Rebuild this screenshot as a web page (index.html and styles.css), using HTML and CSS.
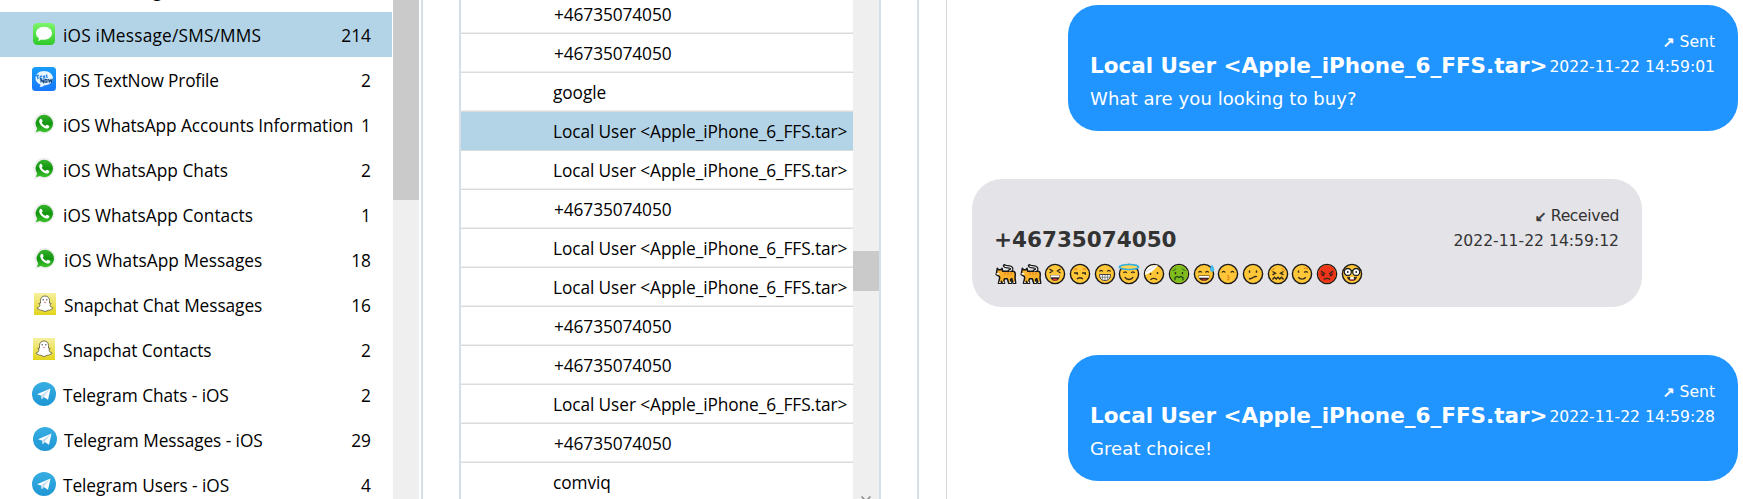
FILE: index.html
```
<!DOCTYPE html>
<html lang="en">
<head>
<meta charset="utf-8">
<title>Messages</title>
<link rel="stylesheet" href="styles.css">
</head>
<body>
<svg class="defs" width="0" height="0">
  <defs>
    <linearGradient id="gGreen" x1="0" y1="0" x2="0" y2="1"><stop offset="0" stop-color="#7df56b"/><stop offset="1" stop-color="#2fc928"/></linearGradient>
    <linearGradient id="gBlue" x1="0" y1="0" x2="0" y2="1"><stop offset="0" stop-color="#189df8"/><stop offset="1" stop-color="#1878fb"/></linearGradient>
    <linearGradient id="gWa" x1="0" y1="0" x2="0" y2="1"><stop offset="0" stop-color="#35b32b"/><stop offset=".5" stop-color="#139510"/><stop offset="1" stop-color="#3fc42e"/></linearGradient>
    <linearGradient id="gSnap" x1="0" y1="0" x2="0" y2="1"><stop offset="0" stop-color="#f6f0a0"/><stop offset="1" stop-color="#e3d51c"/></linearGradient>
    <linearGradient id="gTg" x1="0" y1="0" x2="0" y2="1"><stop offset="0" stop-color="#37aee2"/><stop offset="1" stop-color="#1e96d4"/></linearGradient>
    <symbol id="imsg" viewBox="0 0 24 24"><rect x="1" y="1" width="22" height="22" rx="4.5" fill="url(#gGreen)"/><path d="M12 4.8c4.500 0 8 2.900 8 6.500s-3.500 6.500-8 6.500c-1 0-2-.1-2.800-.4-1 .9-2.200 1.300-3.400 1.300.7-.6 1.200-1.400 1.200-2.300C5.200 15.200 4 13.400 4 11.300c0-3.600 3.500-6.500 8-6.500z" fill="#fff"/></symbol>
    <symbol id="tnow" viewBox="0 0 24 24"><rect width="24" height="24" rx="3.500" fill="url(#gBlue)"/><path d="M12 4c5 0 9 3.200 9 7.300s-4 7.100-9 7.100c-1 1-2.700 1.600-4.500 1.700.8-.8 1-1.700.9-2.600C5.500 16.500 3.500 14.200 3.500 11.300 3.500 7.200 7 4 12 4z" fill="#e9f5ff"/><path d="M3.500 8.800l3.500-.6M5.300 8.500l.8 3.700M8 9.500l2.200-.4M8 9.500l.4 2.500 2-.4M11 8.800l2.200 2.600M13 8.500l-1.600 3M14.500 7.500l.6 3.600" stroke="#2586e5" stroke-width="1.300" fill="none"/><path d="M9 15.500v-3.300l2.500 3.200v-3M13 12.500h2v2.600h-2zM16.500 12l.8 3 1.200-2 .8 2 1-3.300" stroke="#174a86" stroke-width="1.200" fill="none"/></symbol>
    <symbol id="wa" viewBox="0 0 24 24"><path d="M12 1.500a10 9.800 0 1 1-4.700 18.500L2.500 21.500 3.700 17A10 9.800 0 0 1 12 1.500z" fill="#f4f2f4" stroke="#dddbe0" stroke-width=".7" stroke-dasharray="2 1"/><path d="M12.200 2.800a8.700 8.700 0 1 1-4.200 16.300l-4.100 1.200 1.200-4A8.700 8.700 0 0 1 12.200 2.800z" fill="url(#gWa)"/><path d="M8.200 7c.5-.5 1.200-.4 1.500.2l.9 1.700c.2.500-.6 1.200-.8 1.600.5 1.500 1.800 2.700 3.600 3.400.5-.3 1-1.300 1.500-1.100l2 1c.9.500.1 2-.7 2.400-1.300.7-3.300 0-4.900-1-1.700-1.100-3.400-3-3.900-4.800C7 9.100 7.300 7.700 8.200 7z" fill="#fff"/></symbol>
    <symbol id="snap" viewBox="0 0 24 24"><rect x="1" y="1" width="22" height="22" fill="url(#gSnap)"/><path d="M12 4c2.900 0 4.500 2 4.500 4.500v2.700l1.700.2-1.300 1.800c.6 1.500 1.600 2.300 3.100 2.900-.2 1-1.300 1.100-2.300 1.300-.4 1-1.500.9-2.400.8-1 .2-1.800 1.300-3.300 1.300s-2.300-1.100-3.300-1.300c-.9.100-2 .2-2.400-.8-1-.2-2.100-.3-2.300-1.300 1.500-.6 2.500-1.400 3.100-2.900l-1.300-1.800 1.700-.2V8.500C7.500 6 9.100 4 12 4z" fill="#fff" stroke="#69664e" stroke-width=".9"/><path d="M10.200 7v1.500M13.800 7v1.500" stroke="#555" stroke-width="1.100"/><path d="M10.800 10.200c.7.500 1.700.5 2.400 0" stroke="#d88" fill="none"/></symbol>
    <symbol id="tg" viewBox="0 0 24 24"><circle cx="12" cy="12" r="12" fill="url(#gTg)"/><path d="M5 12.300L18.500 6.500 16 17.800 11.800 15 9.800 17.300 9 13.500z" fill="#fff"/><path d="M9 13.500L18 7l-6.300 7.800-1.900 2.300z" fill="#c4dcec"/></symbol>
    <symbol id="cat" viewBox="0 0 22 22"><path d="M14.300 8c2.800-.6 3.200-2.700 1.200-3.700-2.200-1-4.800.2-6-1.600" fill="none" stroke="#181818" stroke-width="3.400" stroke-linecap="round"/><path d="M2.300 5.300l1.300 1.400h2.300l1.200-1.400.6 3h10.600c1.500.4 2 1.500 2 3.200l-.3 3.200.7 5.600h-2.600l-1.300-4.700-1.300 1 .8 3.700h-2.600l-1.400-4.600H9.500l-.6 1.800.7 2.800H7.200l-.8-2-.6 2H3.400l1.300-5.500-.5-1.500-3-1.600z" fill="#fcb32b" stroke="#181818" stroke-width="1.500" stroke-linejoin="round"/><path d="M14.300 8c2.800-.6 3.200-2.700 1.200-3.700-2.200-1-4.800.2-6-1.600" fill="none" stroke="#f5f5f5" stroke-width="1.100"/><path d="M10 9.200v2.600M13 9.200v2.600M16 9.200v2.600" stroke="#df7d19" stroke-width="1.200"/><path d="M1.600 10.800h2.800M4.200 19.400h1.400M8 19.400h1.200M14.500 19.400H16M18.500 19.400H20" stroke="#fff" stroke-width="1.400"/></symbol>
    <symbol id="face" viewBox="0 0 22 22"><circle cx="11" cy="11" r="9.600" fill="#ffc637" stroke="#191919" stroke-width="1.400"/></symbol>
  </defs>
</svg>
<main class="app">
  <section class="sidebar">
    <ul class="artifacts">
      <li class="artifact"><svg class="ico"><use href="#imsg"/></svg><span class="label wide">iOS iMessage</span></li>
      <li class="artifact selected"><svg class="ico"><use href="#imsg"/></svg><span class="label wide">iOS iMessage/SMS/MMS</span><span class="count">214</span></li>
      <li class="artifact"><svg class="ico"><use href="#tnow"/></svg><span class="label tight">iOS TextNow Profile</span><span class="count">2</span></li>
      <li class="artifact"><svg class="ico"><use href="#wa"/></svg><span class="label">iOS WhatsApp Accounts Information</span><span class="count">1</span></li>
      <li class="artifact"><svg class="ico"><use href="#wa"/></svg><span class="label open">iOS WhatsApp Chats</span><span class="count">2</span></li>
      <li class="artifact"><svg class="ico"><use href="#wa"/></svg><span class="label open">iOS WhatsApp Contacts</span><span class="count">1</span></li>
      <li class="artifact nudged"><svg class="ico"><use href="#wa"/></svg><span class="label open">iOS WhatsApp Messages</span><span class="count">18</span></li>
      <li class="artifact nudged"><svg class="ico"><use href="#snap"/></svg><span class="label">Snapchat Chat Messages</span><span class="count">16</span></li>
      <li class="artifact"><svg class="ico"><use href="#snap"/></svg><span class="label">Snapchat Contacts</span><span class="count">2</span></li>
      <li class="artifact"><svg class="ico"><use href="#tg"/></svg><span class="label">Telegram Chats - iOS</span><span class="count">2</span></li>
      <li class="artifact nudged"><svg class="ico"><use href="#tg"/></svg><span class="label">Telegram Messages - iOS</span><span class="count">29</span></li>
      <li class="artifact"><svg class="ico"><use href="#tg"/></svg><span class="label">Telegram Users - iOS</span><span class="count">4</span></li>
    </ul>
    <div class="scroll"><div class="thumb"></div></div>
  </section>
  <section class="grid">
    <ul class="rows">
      <li class="row phone">+46735074050</li>
      <li class="row phone">+46735074050</li>
      <li class="row">google</li>
      <li class="row selected">Local User &lt;Apple_iPhone_6_FFS.tar&gt;</li>
      <li class="row">Local User &lt;Apple_iPhone_6_FFS.tar&gt;</li>
      <li class="row phone">+46735074050</li>
      <li class="row">Local User &lt;Apple_iPhone_6_FFS.tar&gt;</li>
      <li class="row">Local User &lt;Apple_iPhone_6_FFS.tar&gt;</li>
      <li class="row phone">+46735074050</li>
      <li class="row phone">+46735074050</li>
      <li class="row">Local User &lt;Apple_iPhone_6_FFS.tar&gt;</li>
      <li class="row phone">+46735074050</li>
      <li class="row">comviq</li>
    </ul>
    <div class="scroll"><div class="thumb"></div><svg class="chev" viewBox="0 0 10 6"><path d="M.5 .5L5 5 9.500 .5" fill="none" stroke="#888" stroke-width="1.500"/></svg></div>
  </section>
  <section class="chat">
    <div class="thread">
      <article class="bubble sent">
        <div class="status"><span class="arrow">↗</span> Sent</div>
        <div class="head"><b class="name">Local User &lt;Apple_iPhone_6_FFS.tar&gt;</b><span class="time">2022-11-22 14:59:01</span></div>
        <p class="body">What are you looking to buy?</p>
      </article>
      <article class="bubble received">
        <div class="status"><span class="arrow">↙</span> Received</div>
        <div class="head"><b class="name">+46735074050</b><span class="time">2022-11-22 14:59:12</span></div>
        <div class="emojis">
          <svg viewBox="0 0 22 22"><use href="#cat"/></svg>
          <svg viewBox="0 0 22 22"><use href="#cat"/></svg>
          <svg viewBox="0 0 22 22"><use href="#face"/><path d="M5.500 6l3 2-3 2M16.500 6l-3 2 3 2" class="ln"/><path d="M6 12h10c0 3.500-2 5.800-5 5.800S6 15.500 6 12z" fill="#3a2523"/><path d="M6.500 12.300h9v2h-9z" fill="#fff"/><path d="M8.500 16.600c1.500-1 3.500-1 5 0-1.500 1.200-3.500 1.200-5 0z" fill="#e8393c"/></svg>
          <svg viewBox="0 0 22 22"><use href="#face"/><path d="M4.500 6.500c1-.8 2.500-.8 4 0M13.500 6.500c1-.8 2.500-.8 4 0" class="br"/><path d="M5 10h4M13 10h4M8.300 10v1.800M16.300 10v1.800M8 16c1.500-1.500 4-1.500 6 0" class="ln"/></svg>
          <svg viewBox="0 0 22 22"><use href="#face"/><path d="M5.500 8.500c.7-1.500 2.500-1.500 3.200 0M13.300 8.500c.7-1.500 2.500-1.500 3.200 0" class="ln"/><path d="M5.500 11.500h11c0 4-2 6-5.500 6s-5.500-2-5.500-6z" fill="#f5f5f5" stroke="#444" stroke-width="1"/><path d="M6 14.300h10M8.500 12v4.800M11 12v5.300M13.500 12v4.800" stroke="#777" stroke-width=".8"/></svg>
          <svg viewBox="0 0 22 22"><use href="#face"/><ellipse cx="11" cy="4" rx="9.500" ry="2.500" fill="#ffd55a" stroke="#30aedd" stroke-width="1.700"/><path d="M5.500 10c.7-1.500 2.500-1.500 3.200 0M13.300 10c.7-1.500 2.500-1.500 3.200 0M6.800 14.200c2 3 6.400 3 8.400 0" class="ln"/></svg>
          <svg viewBox="0 0 22 22"><use href="#face"/><path d="M1.900 12C2 5 7 1 15 2.500 11 7 7 10.500 1.900 12z" fill="#fff"/><path d="M3 9l9-6" stroke="#ccc" stroke-width=".8"/><path d="M7.500 10v2M14.500 9v2M7.500 16.700c1.500-1.800 5-1.800 6.500 0" class="ln"/></svg>
          <svg viewBox="0 0 22 22"><use href="#face"/><circle cx="11" cy="11" r="9" fill="#7fbd1d"/><path d="M4.500 7.500c1.500 0 2.500-.6 3.500-1.800M17.500 7.500c-1.500 0-2.500-.6-3.500-1.800" stroke="#427820" stroke-width="1.200" fill="none"/><path d="M7.500 9v2.200M14.500 9v2.200" class="ln"/><path d="M7 17.200v-2.500l2-1.300 2 1 2-1 2 1.300v2.500" stroke="#27481b" stroke-width="1.300" fill="none"/></svg>
          <svg viewBox="0 0 22 22"><use href="#face"/><path d="M5.500 9.500c.7-1.500 2.500-1.500 3.200 0M12.500 9.500c.7-1.500 2.500-1.500 3.200 0" class="ln"/><path d="M5.500 12.500h11c0 3.500-2 5.300-5.500 5.300s-5.500-1.800-5.500-5.300z" fill="#3a2523"/><path d="M6 13h10v1.700H6z" fill="#fff"/><path d="M8.500 16.800c1.500-.8 3.500-.8 5 0-1.500.8-3.500.8-5 0z" fill="#e8393c"/><path d="M19 1.500c2 3 2.500 4.200 2.200 5.800-.7 2-3.500 2-4.100 0-.4-1.600.4-3 1.900-5.800z" fill="#48b9e8"/></svg>
          <svg viewBox="0 0 22 22"><use href="#face"/><path d="M5 9.500c.7-1.500 2.500-1.500 3.200 0M13.800 9.500c.7-1.500 2.500-1.500 3.200 0" class="ln"/><path d="M10 12.300c2.500.2 2.500 1.800.5 2.100 2.300.3 2.300 2.200-.5 2.400" class="br"/></svg>
          <svg viewBox="0 0 22 22"><use href="#face"/><path d="M7.500 7.500v2.200M14.500 7.500v2.200M7 15.500c2 .8 3.500-.5 4.500-1.300 1-.7 2-1 3.500-.6" class="ln"/></svg>
          <svg viewBox="0 0 22 22"><use href="#face"/><path d="M4 7.500c1.500 0 2.500-1 3.500-2.500M18 7.500c-1.500 0-2.500-1-3.500-2.500" class="br"/><path d="M5.500 8.500l3 1.700-3 1.600M16.500 8.500l-3 1.700 3 1.600M5.500 16.500l2-2.300 1.800 1.800 1.700-1.800 1.700 1.800 1.800-1.800 2 2.300" class="ln"/></svg>
          <svg viewBox="0 0 22 22"><use href="#face"/><path d="M13 5.500c1.500-.8 3-.3 4.200.8" class="br"/><path d="M7.500 7.500v2.200M13.200 9.500c1-1 2.500-1 3.500 0M7.300 14.200c2 2.500 5.500 2.500 7.500 0" class="ln"/></svg>
          <svg viewBox="0 0 22 22"><use href="#face"/><circle cx="11" cy="11" r="9" fill="#ee3419"/><path d="M4.500 9.500l4 1.800v2.200l-3-.5zM17.500 9.500l-4 1.800v2.200l3-.5z" fill="#9c1711"/><path d="M5 8l4 3M17 8l-4 3M7.200 11v2M14.800 11v2M8 16.500c1.500-1.500 4.500-1.500 6 0" class="ln"/></svg>
          <svg viewBox="0 0 22 22"><use href="#face"/><path d="M1.500 7.500h19" class="ln"/><circle cx="6.800" cy="9" r="3.500" fill="#fff" stroke="#222" stroke-width="1.300"/><circle cx="15.200" cy="9" r="3.500" fill="#fff" stroke="#222" stroke-width="1.300"/><path d="M6.800 8v2M15.200 8v2" class="ln"/><path d="M6 14h10c-.7 2.600-2.300 4-5 4s-4.300-1.400-5-4z" fill="#3a2523"/><path d="M9.200 14h3.600v2.500H9.200z" fill="#fff"/><path d="M9.500 17h3" stroke="#e8393c"/></svg>
        </div>
      </article>
      <article class="bubble sent">
        <div class="status"><span class="arrow">↗</span> Sent</div>
        <div class="head"><b class="name">Local User &lt;Apple_iPhone_6_FFS.tar&gt;</b><span class="time">2022-11-22 14:59:28</span></div>
        <p class="body">Great choice!</p>
      </article>
    </div>
  </section>
</main>
</body>
</html>
```

FILE: styles.css
```
* { box-sizing: border-box; }
body { margin: 0; background: #fff; color: #000; font-family: "Open Sans", "Noto Sans", sans-serif; font-size: 17.3px; overflow: hidden; }
ul, p { margin: 0; padding: 0; list-style: none; }
.defs { position: absolute; }
.app { display: flex; width: 1743px; height: 499px; overflow: hidden; }

.sidebar { display: flex; flex: none; width: 423px; height: 499px; border-right: 2px solid #d5dfe7; overflow: hidden; }
.artifacts { width: 392px; margin-top: -33px; flex: none; }
.artifact { display: flex; align-items: center; height: 45px; padding: 0 21px 0 32px; white-space: nowrap; }
.artifact.selected, .row.selected { background: #b3d4e7; }
.artifact.nudged { padding-left: 33px; }
.ico { width: 24px; height: 24px; flex: none; margin: 0 7px 1px 0; }
.label, .count { line-height: 24px; padding-top: 2px; }
.label { letter-spacing: -0.07px; }
.label.wide { letter-spacing: 0.2px; }
.label.open { letter-spacing: 0.04px; }
.label.tight { letter-spacing: -0.2px; }
.count { margin-left: auto; }
.scroll { flex: none; width: 26px; height: 499px; background: #efefef; }
.sidebar .scroll { margin-left: 1px; }
.thumb { background: #cacaca; }
.sidebar .thumb { height: 200px; }

.grid { display: flex; flex: none; width: 422px; margin-left: 36px; border-left: 2px solid #d5dfe7; border-right: 2px solid #d5dfe7; overflow: hidden; }
.rows { flex: none; width: 392px; margin-top: -5px; }
.row { height: 39px; padding: 1px 0 0 92px; line-height: 38px; white-space: nowrap; border-bottom: 1px solid #dadbdc; box-shadow: inset 0 -1px #eeeeee; letter-spacing: -0.09px; }
.row.selected { box-shadow: none; }
.row.phone { padding-left: 93px; }
.grid .scroll { display: flex; flex-direction: column; align-items: center; }
.grid .thumb { flex: none; width: 26px; height: 40px; margin-top: 251px; }
.chev { width: 10px; height: 6px; margin-top: 205px; flex: none; }

.chat { flex: none; width: 826px; margin-left: 36px; border-left: 2px solid #d5dfe7; padding-left: 27px; }
.thread { display: flex; flex-direction: column; height: 499px; border-left: 1px solid #d9d9d9; padding: 5px 5px 0 25px; font-family: "DejaVu Sans", sans-serif; }
.bubble { width: 670px; height: 126px; flex: none; border-radius: 30px; padding: 25px 23px 0 22px; }
.sent { align-self: flex-end; background: #2094ff; color: #fff; }
.received { height: 128px; margin: 48px 0; background: #e4e3e8; color: #333; }
.status { height: 25px; line-height: 25px; text-align: right; font-size: 15.6px; }
.received .status { letter-spacing: -0.35px; }
.arrow { font-size: 14px; -webkit-text-stroke: 0.6px currentColor; }
.head { display: flex; justify-content: space-between; height: 25px; line-height: 25px; white-space: nowrap; }
.name { font-size: 21.5px; line-height: 21px; }
.time { font-size: 15.6px; }
.body { font-size: 18px; line-height: 25px; padding-top: 6px; letter-spacing: 0.08px; }
.emojis { display: flex; gap: 2.7px; margin: 9px 0 0 1px; }
.emojis svg { width: 22px; height: 22px; flex: none; }
.ln { fill: none; stroke: #352b1c; stroke-width: 1.4; }
.br { fill: none; stroke: #e78f1d; stroke-width: 1.2; }
```
